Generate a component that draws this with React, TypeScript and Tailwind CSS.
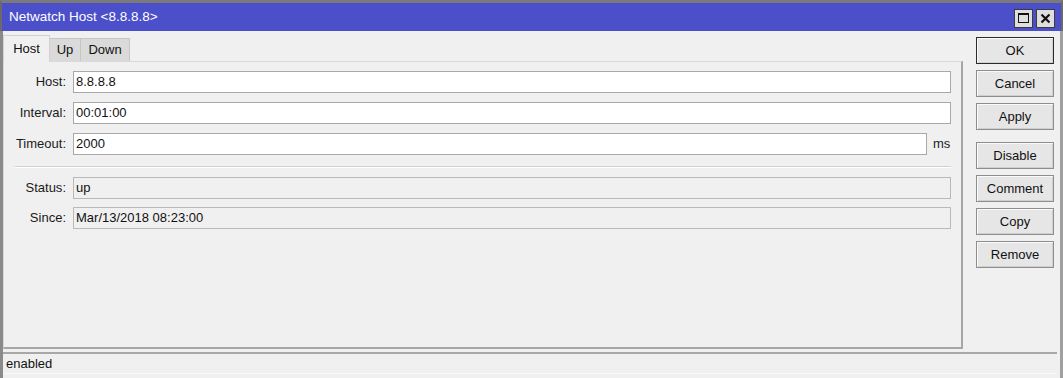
import React from "react";

const font = { fontFamily: '"Liberation Sans", Arial, sans-serif' };

function Field({ label, value, readOnly, suffix }: { label: string; value: string; readOnly?: boolean; suffix?: boolean }) {
  return (
    <div className="flex items-center h-[22px]">
      <div className="w-[63px] pr-[1px] text-right text-[13px] text-[#1a1a1a]">{label}:</div>
      <div
        className={
          "ml-[6px] flex-1 h-[22px] border px-[2px] flex items-center text-[13px] text-[#111] " +
          (readOnly ? "bg-[#f0f0f0] border-[#b9b9b9]" : "bg-white border-[#a9a9a9]")
        }
      >
        {value}
      </div>
      {suffix ? <div className="w-[24px] pl-[6px] text-[13px] text-[#222]">ms</div> : null}
    </div>
  );
}

function Btn({ children, primary, className = "" }: { children: React.ReactNode; primary?: boolean; className?: string }) {
  return (
    <button
      className={
        "w-[78px] h-[27px] text-[13px] text-[#111] bg-[#e6e6e6] shadow-[inset_1px_1px_0_#fafafa,inset_-1px_-1px_0_#d0d0d0] " +
        (primary ? "border border-[#2b2b2b]" : "border border-[#8e8e8e]") +
        " " +
        className
      }
    >
      {children}
    </button>
  );
}

export default function App() {
  return (
    <div style={font} className="w-[1063px] h-[378px] bg-[#f0f0f0] flex flex-col overflow-hidden">
      {/* title bar */}
      <div className="h-[31px] border-t-[3px] border-[#7a7a7a] bg-[#4b4fc9] flex items-center pl-[7px] pr-[6px] border-l-2 border-l-[#6a6a6a] border-r-2 border-r-[#6a6a6a]">
        <span className="text-white text-[13.5px] pt-[1px]">Netwatch Host &lt;8.8.8.8&gt;</span>
        <div className="ml-auto flex gap-[3px] pt-[2px]">
          <div className="w-[19px] h-[19px] bg-[#dedede] border border-[#3c3c3c] flex items-center justify-center">
            <div className="w-[11px] h-[10px] border border-[#111] border-t-2" />
          </div>
          <div className="w-[19px] h-[19px] bg-[#dedede] border border-[#3c3c3c] flex items-center justify-center">
            <svg width="11" height="11" viewBox="0 0 11 11">
              <path d="M1.5 1.5 L9.5 9.5 M9.5 1.5 L1.5 9.5" stroke="#111" strokeWidth="2.2" />
            </svg>
          </div>
        </div>
      </div>

      {/* body */}
      <div className="flex-1 flex border-l-[3px] border-[#8a8a8a] border-r-[3px] border-r-[#a0a0a0]">
        <div className="w-[960px] flex flex-col pt-[3px]">
          {/* tabs */}
          <div className="flex items-end h-[27px]">
            <div className="h-[27px] w-[47px] bg-[#f0f0f0] border border-b-0 border-[#d2d2d2] text-[13px] text-[#111] flex items-center justify-center relative top-[1px] z-10">
              Host
            </div>
            <div className="h-[23px] w-[31px] bg-[#dadada] border border-b-0 border-l-0 border-[#c6c6c6] text-[13px] text-[#111] flex items-center justify-center">
              Up
            </div>
            <div className="h-[23px] w-[49px] bg-[#dadada] border border-b-0 border-l-0 border-[#c6c6c6] text-[13px] text-[#111] flex items-center justify-center">
              Down
            </div>
          </div>
          {/* panel */}
          <div className="h-[288px] border border-[#d9d9d9] border-r-2 border-r-[#a6a6a6] border-b-2 border-b-[#a6a6a6] pt-[9px] pr-[10px] flex flex-col">
            <Field label="Host" value="8.8.8.8" />
            <div className="h-[9px]" />
            <Field label="Interval" value="00:01:00" />
            <div className="h-[9px]" />
            <Field label="Timeout" value="2000" suffix />
            <div className="ml-[11px] mt-[11px] mb-[9px] h-[2px] border-t border-[#d0d0d0] border-b border-b-white" />
            <Field label="Status" value="up" readOnly />
            <div className="h-[8px]" />
            <Field label="Since" value="Mar/13/2018 08:23:00" readOnly />
          </div>
        </div>

        {/* buttons */}
        <div className="flex flex-col gap-[6px] pl-[13px] pt-[6px]">
          <Btn primary>OK</Btn>
          <Btn>Cancel</Btn>
          <Btn>Apply</Btn>
          <Btn className="mt-[6px]">Disable</Btn>
          <Btn>Comment</Btn>
          <Btn>Copy</Btn>
          <Btn>Remove</Btn>
        </div>
      </div>

      {/* status bar */}
      <div className="h-[26px] border-l-[3px] border-[#8a8a8a] border-r-[3px] border-r-[#a0a0a0] pr-[3px] pb-[4px]">
        <div className="h-full border-t-2 border-[#a8a8a8] border-b border-b-[#fafafa] flex items-center pl-[3px] text-[13px] text-[#111]">
          enabled
        </div>
      </div>
    </div>
  );
}
